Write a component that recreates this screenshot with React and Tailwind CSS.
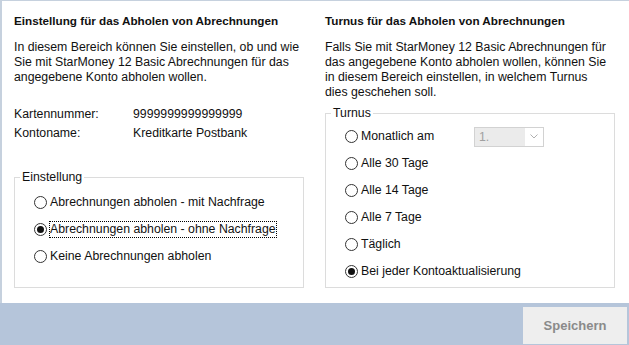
import React from 'react';

const Radio = ({ checked }) => (
  <span className="w-[13px] h-[13px] shrink-0 rounded-full border border-[#333] bg-white flex items-center justify-center">
    {checked && <span className="w-[7px] h-[7px] rounded-full bg-[#111]" />}
  </span>
);

const Option = ({ label, checked, focused }) => (
  <div className="flex items-center h-[15px]">
    <Radio checked={checked} />
    {focused ? (
      <span className="ml-[2px] -my-px border border-dotted border-black leading-[15px]">{label}</span>
    ) : (
      <span className="ml-[3px]">{label}</span>
    )}
  </div>
);

const Group = ({ title, className, children }) => (
  <fieldset className={`w-[290px] border border-[#dcdcdc] ${className}`}>
    <legend className="ml-[5px] px-[2px] leading-[15px]">{title}</legend>
    <div className="pl-[19px] flex flex-col gap-[12px]">{children}</div>
  </fieldset>
);

export default () => {
  return (
    <div className="w-[629px] h-[345px] flex flex-col font-['Liberation_Sans',Arial,sans-serif] text-[12.3px] leading-[15px] text-[#111]">
      <div className="h-[303px] bg-white border-t border-l-2 border-[#c6d1de] grid grid-cols-[312px_1fr]">
        <div className="pl-[12px] pt-[12px]">
          <h2 className="font-bold text-[11.7px]">Einstellung für das Abholen von Abrechnungen</h2>
          <p className="mt-[12px]">
            In diesem Bereich können Sie einstellen, ob und wie
            <br />
            Sie mit StarMoney 12 Basic Abrechnungen für das
            <br />
            angegebene Konto abholen wollen.
          </p>
          <div className="mt-[22px] flex flex-col gap-[4px]">
            <div className="flex">
              <span className="w-[119px]">Kartennummer:</span>
              <span>9999999999999999</span>
            </div>
            <div className="flex">
              <span className="w-[119px]">Kontoname:</span>
              <span>Kreditkarte Postbank</span>
            </div>
          </div>
          <Group title="Einstellung" className="mt-[29px] pt-[10px] pb-[23px]">
            <Option label="Abrechnungen abholen - mit Nachfrage" />
            <Option label="Abrechnungen abholen - ohne Nachfrage" checked focused />
            <Option label="Keine Abrechnungen abholen" />
          </Group>
        </div>

        <div className="pl-[11px] pt-[12px]">
          <h2 className="font-bold text-[11.7px]">Turnus für das Abholen von Abrechnungen</h2>
          <p className="mt-[12px]">
            Falls Sie mit StarMoney 12 Basic Abrechnungen für
            <br />
            das angegebene Konto abholen wollen, können Sie
            <br />
            in diesem Bereich einstellen, in welchem Turnus
            <br />
            dies geschehen soll.
          </p>
          <Group title="Turnus" className="mt-[6px] pt-[8px] pb-[8px]">
            <div className="flex items-center h-[15px]">
              <Radio />
              <span className="ml-[3px] w-[113px]">Monatlich am</span>
              <div className="w-[70px] h-[20px] shrink-0 border border-[#d2d2d2] flex">
                <span className="flex-1 bg-[#ebebeb] text-[#a0a0a0] pl-[4px] leading-[18px]">1.</span>
                <span className="w-[18px] flex items-center justify-center">
                  <svg width="8" height="5" viewBox="0 0 8 5">
                    <path d="M0.5 0.5 L4 4 L7.5 0.5" fill="none" stroke="#b0b0b0" strokeWidth="1" />
                  </svg>
                </span>
              </div>
            </div>
            <Option label="Alle 30 Tage" />
            <Option label="Alle 14 Tage" />
            <Option label="Alle 7 Tage" />
            <Option label="Täglich" />
            <Option label="Bei jeder Kontoaktualisierung" checked />
          </Group>
        </div>
      </div>

      <div className="flex-1 bg-[#b5c5da] flex justify-end items-start pt-[4px] pr-[2px]">
        <button className="w-[104px] h-[37px] bg-[#eeeeee] text-[#8a8a8a] font-bold text-[13px]">
          Speichern
        </button>
      </div>
    </div>
  );
};
